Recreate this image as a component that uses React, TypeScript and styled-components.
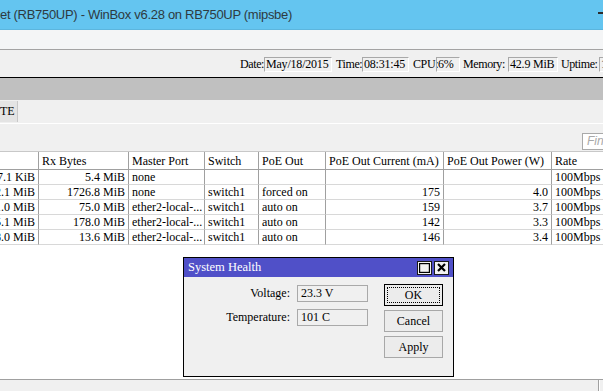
import React from "react";
import styled, { createGlobalStyle } from "styled-components";

const GlobalStyle = createGlobalStyle`
  html, body { margin: 0; padding: 0; background: #ffffff; overflow: hidden; }
  body { font-family: "Liberation Serif", "Times New Roman", serif; font-size: 12px; color: #000; }
  * { box-sizing: border-box; }
`;

const Screen = styled.div`
  position: relative;
  width: 603px;
  height: 391px;
  display: flex;
  flex-direction: column;
  overflow: hidden;
`;

const TitleBar = styled.div`
  height: 30px;
  flex: none;
  background: #64c5f0;
  border-bottom: 1px solid #5cb6de;
  display: flex;
  align-items: center;
  justify-content: space-between;
  overflow: hidden;
`;

const TitleText = styled.span`
  font-family: "Liberation Sans", Arial, sans-serif;
  font-size: 13px;
  letter-spacing: -0.3px;
  color: #2e3a40;
  white-space: nowrap;
`;

const MinGlyph = styled.span`
  width: 10px;
  height: 2px;
  background: #2b2b2b;
  margin-right: -5px;
  margin-top: -4px;
`;

const MenuBar = styled.div`
  height: 20px;
  flex: none;
  background: #f4f5f6;
  border-bottom: 1px solid #a3a3a3;
`;

const StatusBar = styled.div`
  height: 28px;
  flex: none;
  background: #f0f0f0;
  border-bottom: 1px solid #000;
  display: flex;
  align-items: center;
  padding-left: 240px;
  padding-top: 1px;
  white-space: nowrap;
  overflow: hidden;
`;

const StatLabel = styled.span<{ $w: number; $gap?: number }>`
  flex: none;
  width: ${(p) => p.$w}px;
  margin-left: ${(p) => p.$gap ?? 0}px;
  font-size: 12px;
  letter-spacing: -0.4px;
  white-space: nowrap;
  overflow: visible;
`;

const StatBox = styled.span<{ $w: number }>`
  display: inline-block;
  flex: none;
  width: ${(p) => p.$w}px;
  height: 15px;
  line-height: 13px;
  padding-left: 1px;
  margin-left: 1px;
  border-top: 1px solid #a8a8a8;
  border-left: 1px solid #a8a8a8;
  border-right: 1px solid #ffffff;
  border-bottom: 1px solid #ffffff;
  font-size: 12px;
  letter-spacing: -0.2px;
  overflow: hidden;
`;

const GrayBand = styled.div`
  height: 22px;
  flex: none;
  background: #c0c0c0;
`;

const TabBar = styled.div`
  height: 24px;
  flex: none;
  background: #f0f0f0;
  border-bottom: 1px solid #ffffff;
  display: flex;
  align-items: stretch;
  padding-top: 1px;
  padding-bottom: 1px;
`;

const Tab = styled.div`
  width: 18px;
  background: #e4e4e4;
  border-right: 1px solid #c8c8c8;
  display: flex;
  align-items: center;
  font-size: 12px;
  white-space: nowrap;
  overflow: hidden;
`;

const FilterRow = styled.div`
  height: 27px;
  flex: none;
  background: #f0f0f0;
  display: flex;
  justify-content: flex-end;
  align-items: flex-end;
  padding-bottom: 1px;
  overflow: hidden;
`;

const FindBox = styled.div`
  width: 30px;
  height: 17px;
  margin-right: -9px;
  background: #ffffff;
  border: 1px solid #a9a9a9;
  font-family: "Liberation Sans", Arial, sans-serif;
  font-style: italic;
  font-size: 12px;
  color: #a8a8a8;
  padding-left: 4px;
  line-height: 15px;
`;

const ListArea = styled.div`
  flex: 1;
  background: #ffffff;
  overflow: hidden;
`;

const Grid = styled.div`
  display: grid;
  grid-template-columns: 39px 90px 76px 54px 67px 118px 108px 80px;
  border-top: 1px solid #c8c8c8;
`;

const HeadCell = styled.div`
  height: 18px;
  line-height: 18px;
  padding: 0 3px;
  border-right: 1px solid #a0a0a0;
  border-bottom: 1px solid #a0a0a0;
  white-space: nowrap;
  overflow: hidden;
`;

const Cell = styled.div<{ $right?: boolean }>`
  height: 15px;
  line-height: 15px;
  padding: 0 3px;
  text-align: ${(p) => (p.$right ? "right" : "left")};
  border-right: 1px solid #a0a0a0;
  border-bottom: 1px solid #d8d8d8;
  white-space: nowrap;
  overflow: hidden;
  direction: ${(p) => (p.$right ? "rtl" : "ltr")};
`;

const CellText = styled.span`
  direction: ltr;
  unicode-bidi: embed;
`;

const BottomBar = styled.div`
  height: 12px;
  flex: none;
  background: #f0f0f0;
  border-top: 1px solid #a0a0a0;
  display: flex;
  justify-content: flex-end;
`;

const BottomDivider = styled.div`
  width: 2px;
  border-left: 1px solid #a0a0a0;
  border-right: 1px solid #ffffff;
  margin-right: 3px;
`;

/* Dialog (floating window) */
const Dialog = styled.div`
  position: absolute;
  left: 183px;
  top: 257px;
  width: 271px;
  height: 120px;
  border: 1px solid #000;
  background: #f0f0f0;
  display: flex;
  flex-direction: column;
`;

const DlgTitle = styled.div`
  height: 19px;
  flex: none;
  background: #5050c8;
  display: flex;
  align-items: center;
  justify-content: space-between;
  padding: 0 4px 0 4px;
`;

const DlgTitleText = styled.span`
  color: #ffffff;
  font-size: 12.5px;
`;

const TitleBtns = styled.div`
  display: flex;
  gap: 2px;
`;

const TitleBtn = styled.div`
  width: 15px;
  height: 14px;
  background: #f2f2f2;
  border: 1px solid #1a1a1a;
  display: flex;
  align-items: center;
  justify-content: center;
`;

const DlgBody = styled.div`
  display: flex;
  padding-top: 7px;
`;

const Form = styled.div`
  display: grid;
  grid-template-columns: 106px 71px;
  column-gap: 7px;
  row-gap: 7px;
  padding-top: 1px;
  align-content: start;
`;

const FieldLabel = styled.div`
  text-align: right;
  height: 17px;
  line-height: 17px;
  font-size: 12px;
`;

const Field = styled.div`
  height: 17px;
  line-height: 15px;
  border: 1px solid #a9a9a9;
  padding-left: 3px;
  font-size: 12px;
`;

const BtnCol = styled.div`
  display: flex;
  flex-direction: column;
  gap: 4px;
  margin-left: 16px;
`;

const Button = styled.div<{ $default?: boolean }>`
  width: 59px;
  height: 22px;
  background: #ececec;
  border: 1px solid ${(p) => (p.$default ? "#000" : "#a8a8a8")};
  display: flex;
  align-items: center;
  justify-content: center;
  font-size: 12px;
  position: relative;
  ${(p) =>
    p.$default
      ? `&::after { content: ""; position: absolute; inset: 2px; border: 1px dotted #000; }`
      : ""}
`;

type Row = [string, string, string, string, string, string, string, string];

const rows: Row[] = [
  ["7.1 KiB", "5.4 MiB", "none", "", "", "", "", "100Mbps"],
  ["2.1 MiB", "1726.8 MiB", "none", "switch1", "forced on", "175", "4.0", "100Mbps"],
  ["1.0 MiB", "75.0 MiB", "ether2-local-...", "switch1", "auto on", "159", "3.7", "100Mbps"],
  ["5.1 MiB", "178.0 MiB", "ether2-local-...", "switch1", "auto on", "142", "3.3", "100Mbps"],
  ["8.0 MiB", "13.6 MiB", "ether2-local-...", "switch1", "auto on", "146", "3.4", "100Mbps"],
];

const headers = ["", "Rx Bytes", "Master Port", "Switch", "PoE Out", "PoE Out Current (mA)", "PoE Out Power (W)", "Rate"];
const rightCols = [true, true, false, false, false, true, true, false];

export default function App() {
  return (
    <>
      <GlobalStyle />
      <Screen>
        <TitleBar>
          <TitleText>et (RB750UP) - WinBox v6.28 on RB750UP (mipsbe)</TitleText>
          <MinGlyph />
        </TitleBar>
        <MenuBar />
        <StatusBar>
          <StatLabel $w={23}>Date:</StatLabel>
          <StatBox $w={68}>May/18/2015</StatBox>
          <StatLabel $w={25} $gap={4}>Time:</StatLabel>
          <StatBox $w={47}>08:31:45</StatBox>
          <StatLabel $w={22} $gap={4}>CPU:</StatLabel>
          <StatBox $w={24}>6%</StatBox>
          <StatLabel $w={44} $gap={3}>Memory:</StatLabel>
          <StatBox $w={50}>42.9 MiB</StatBox>
          <StatLabel $w={37} $gap={3}>Uptime:</StatLabel>
          <StatBox $w={60}>1d</StatBox>
        </StatusBar>
        <GrayBand />
        <TabBar>
          <Tab>TE</Tab>
        </TabBar>
        <FilterRow>
          <FindBox>Find</FindBox>
        </FilterRow>
        <ListArea>
          <Grid>
            {headers.map((h, i) => (
              <HeadCell key={"h" + i}>{h}</HeadCell>
            ))}
            {rows.map((r, ri) =>
              r.map((c, ci) => (
                <Cell key={ri + "-" + ci} $right={rightCols[ci]}>
                  <CellText>{c}</CellText>
                </Cell>
              ))
            )}
          </Grid>
        </ListArea>
        <BottomBar>
          <BottomDivider />
        </BottomBar>
        <Dialog>
          <DlgTitle>
            <DlgTitleText>System Health</DlgTitleText>
            <TitleBtns>
              <TitleBtn>
                <svg width="11" height="10" viewBox="0 0 11 10">
                  <rect x="0.5" y="0.5" width="10" height="9" fill="none" stroke="#000" strokeWidth="1.4" />
                </svg>
              </TitleBtn>
              <TitleBtn>
                <svg width="9" height="9" viewBox="0 0 9 9">
                  <path d="M1 1 L8 8 M8 1 L1 8" stroke="#000" strokeWidth="2.2" />
                </svg>
              </TitleBtn>
            </TitleBtns>
          </DlgTitle>
          <DlgBody>
            <Form>
              <FieldLabel>Voltage:</FieldLabel>
              <Field>23.3 V</Field>
              <FieldLabel>Temperature:</FieldLabel>
              <Field>101 C</Field>
            </Form>
            <BtnCol>
              <Button $default>OK</Button>
              <Button>Cancel</Button>
              <Button>Apply</Button>
            </BtnCol>
          </DlgBody>
        </Dialog>
      </Screen>
    </>
  );
}
